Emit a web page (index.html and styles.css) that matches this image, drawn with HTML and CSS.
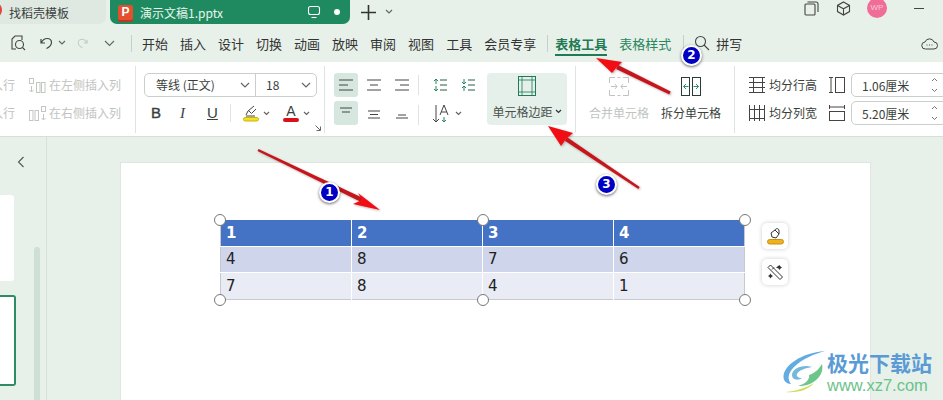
FILE: index.html
```html
<!DOCTYPE html>
<html lang="zh-CN">
<head>
    <meta charset="UTF-8">
    <title>演示文稿1.pptx</title>
    <link rel="stylesheet" href="styles.css">
</head>
<body>
<div class="app">
    <!-- tabs -->
    <header class="tabbar">
        <div class="tab tab-home"><span class="tab-dot"></span>找稻壳模板</div>
        <div class="tab tab-active">
            <span class="ppt-logo">P</span>
            <span class="tab-name">演示文稿1.pptx</span>
            <svg class="tab-monitor" width="14" height="14" viewBox="0 0 14 14" fill="none" stroke="#fff" stroke-width="1.1"><rect x="1.5" y="1.5" width="11" height="8" rx="2"/><path d="M4.5 12.5h5"/></svg>
            <span class="tab-saved"></span>
        </div>
        <svg class="tab-plus" width="15" height="15" viewBox="0 0 15 15" stroke="#333" stroke-width="1.6"><path d="M7.5 0v15M0 7.5h15"/></svg>
        <svg class="chev tab-more" width="8" height="6" viewBox="0 0 8 6"><path d="M1 1l3 3 3-3"/></svg>
        <div class="winctl">
            <svg width="15" height="15" viewBox="0 0 15 15" fill="none" stroke="#444" stroke-width="1.1"><rect x="1" y="3" width="10" height="11" rx="1"/><path d="M3.5 1h8.5a2 2 0 0 1 2 2v8"/></svg>
            <svg class="win-cube" width="15" height="15" viewBox="0 0 15 15" fill="none" stroke="#444" stroke-width="1.1"><path d="M7.5 1l6 3.4v6.2l-6 3.4-6-3.4V4.400zM1.500 4.400l6 3.400 6-3.400M7.500 7.800V14"/></svg>
            <span class="avatar">WP</span>
            <span class="win-min"></span>
        </div>
    </header>

    <!-- menu row -->
    <nav class="menubar">
        <div class="quick">
            <svg class="q-preview" width="16" height="16" viewBox="0 0 16 16" fill="none" stroke="#444" stroke-width="1.1"><path d="M6 14H2V4l3-3h7v4"/><circle cx="9.500" cy="9.500" r="4"/><path d="M12.500 12.500l2.500 2.500"/></svg>
            <svg class="q-undo" width="13" height="13" viewBox="0 0 13 13" fill="none" stroke="#444" stroke-width="1.2"><path d="M1 2v4h4M1.500 5.500C3 2.500 5 1.500 7 1.500c3 0 4.500 2 4.500 4 0 2.500-2 4.500-5 6"/></svg>
            <svg class="chev q-c1" width="8" height="6" viewBox="0 0 8 6"><path d="M1 1l3 3 3-3"/></svg>
            <svg class="q-redo" width="11" height="13" viewBox="0 0 13 13" fill="none" stroke="#c5cbc7" stroke-width="1.2"><path d="M12 2v4H8M11.500 5.500C10 2.500 8 1.500 6 1.500c-3 0-4.500 2-4.500 4 0 2.500 2 4.500 5 6"/></svg>
            <svg class="chev q-c2" width="11" height="7" viewBox="0 0 11 7"><path d="M1 1l4.500 4.500L10 1"/></svg>
        </div>
        <span class="menu-sep sep-first"></span>
        <div class="menu-items">
            <a>开始</a><a>插入</a><a>设计</a><a>切换</a><a>动画</a><a>放映</a><a>审阅</a><a>视图</a><a>工具</a><a>会员专享</a>
        </div>
        <span class="menu-sep sep-tools"></span>
        <a class="menu-tool menu-current">表格工具</a>
        <a class="menu-tool">表格样式</a>
        <span class="menu-sep sep-search"></span>
        <svg class="search-ico" width="16" height="16" viewBox="0 0 16 16" fill="none" stroke="#444" stroke-width="1.1"><circle cx="6.500" cy="6.500" r="5"/><path d="M10 10l5 5"/></svg>
        <a class="menu-spell">拼写</a>
        <svg class="cloud-ico" width="17" height="13" viewBox="0 0 17 13" fill="none" stroke="#444" stroke-width="1"><path d="M4.500 12a3.500 3.500 0 0 1-.5-7A4.800 4.800 0 0 1 13 5a3.500 3.500 0 0 1 0 7z"/><path d="M5.500 8h1M8 8h1M10.500 8h1"/></svg>
    </nav>

    <!-- ribbon -->
    <section class="ribbon">
        <div class="group g-insert">
            <div class="insert-col">
                <span class="off">在上方插入行</span>
                <span class="off">在下方插入行</span>
            </div>
            <div class="insert-col">
                <span class="off with-icon">
                    <svg width="17" height="15" viewBox="0 0 17 15" fill="none" stroke="#c3c7c4"><rect x=".5" y=".5" width="4" height="5"/><path d="M2.500 8v6M.5 12l2 2 2-2"/><rect x="7.500" y="4.500" width="3.500" height="10"/><rect x="12.500" y="4.500" width="3.500" height="10"/></svg>
                    在左侧插入列
                </span>
                <span class="off with-icon">
                    <svg width="17" height="15" viewBox="0 0 17 15" fill="none" stroke="#c3c7c4"><rect x="12.500" y=".5" width="4" height="5"/><path d="M14.500 8v6M12.500 12l2 2 2-2"/><rect x=".5" y="4.500" width="3.500" height="10"/><rect x="6" y="4.500" width="3.500" height="10"/></svg>
                    在右侧插入列
                </span>
            </div>
        </div>

        <div class="group g-font">
            <div class="font-select">
                <div class="fs-name">等线 (正文)<svg class="chev" width="10" height="6" viewBox="0 0 10 6"><path d="M1 1l4 4 4-4"/></svg></div>
                <div class="fs-size">18<svg class="chev" width="10" height="6" viewBox="0 0 10 6"><path d="M1 1l4 4 4-4"/></svg></div>
            </div>
            <div class="font-row">
                <b class="f-b">B</b>
                <i class="f-i">I</i>
                <u class="f-u">U</u>
                <span class="f-sep"></span>
                <span class="f-color">
                    <svg width="16" height="17" viewBox="0 0 16 17" fill="none" stroke="#444"><path d="M3 10l2-4 6-5M6 6l2.500 2.500L13 4M3 11h9" stroke-width="1"/><rect x=".5" y="12.500" width="15" height="3.500" rx="1.700" fill="#f5e11d" stroke="#c9b40f"/></svg>
                    <svg class="chev" width="7" height="5" viewBox="0 0 7 5"><path d="M1 1l2.500 2.500L6 1"/></svg>
                </span>
                <span class="f-color f-text">
                    <span class="f-a">A<em></em></span>
                    <svg class="chev" width="7" height="5" viewBox="0 0 7 5"><path d="M1 1l2.500 2.500L6 1"/></svg>
                </span>
            </div>
            <svg class="launcher" width="6" height="6" viewBox="0 0 6 6" fill="none" stroke="#666"><path d="M.5.500l4.500 4.500M1.500 5.500h4v-4"/></svg>
        </div>

        <div class="group g-para">
            <div class="align-grid">
                <span class="al al-on"><svg width="14" height="12" viewBox="0 0 14 12" stroke="#444"><path d="M0 1h14M0 6h9M0 11h14"/></svg></span>
                <span class="al"><svg width="14" height="12" viewBox="0 0 14 12" stroke="#444"><path d="M0 1h14M3 6h8M0 11h14"/></svg></span>
                <span class="al"><svg width="14" height="12" viewBox="0 0 14 12" stroke="#444"><path d="M0 1h14M5 6h9M0 11h14"/></svg></span>
                <span class="al al-on"><svg width="12" height="12" viewBox="0 0 12 12" stroke="#444"><path d="M0 1h12M2 5h8"/></svg></span>
                <span class="al"><svg width="12" height="12" viewBox="0 0 12 12" stroke="#444"><path d="M0 4h12M2 7.500h8M0 11h12"/></svg></span>
                <span class="al"><svg width="12" height="12" viewBox="0 0 12 12" stroke="#444"><path d="M2 8h8M0 11h12"/></svg></span>
            </div>
            <div class="para-sep"><span></span><span></span></div>
            <div class="para-col">
                <div class="para-row">
                    <svg width="14" height="14" viewBox="0 0 14 14" fill="none" stroke="#2d5a48"><path d="M7 2h7M7 7h7M7 12h7"/><path d="M3 1v5M1 3l2-2 2 2M3 8v5M1 11l2 2 2-2" stroke="#1f8a5f"/></svg>
                    <svg width="14" height="14" viewBox="0 0 14 14" fill="none" stroke="#2d5a48"><path d="M7 2h7M7 7h7M7 12h7"/><path d="M3 1v5M1 4l2 2 2-2M3 8v5M1 10l2-2 2 2" stroke="#1f8a5f"/></svg>
                </div>
                <div class="para-row para-dir">
                    <svg width="18" height="19" viewBox="0 0 18 19" fill="none" stroke="#444"><path d="M4 1v17M1 15l3 3 3-3"/><path d="M8 11l4-10 4 10M9.300 8h5.400"/><path d="M12 13v5M10 16l2 2 2-2" stroke="#1f8a5f"/></svg>
                    <svg class="chev" width="7" height="5" viewBox="0 0 7 5"><path d="M1 1l2.500 2.500L6 1"/></svg>
                </div>
            </div>
        </div>

        <div class="group g-margin">
            <div class="margin-btn">
                <svg width="18" height="20" viewBox="0 0 18 20" fill="none" stroke="#1f7a55" stroke-width="1"><rect x=".5" y=".5" width="17" height="19"/><path d="M4 .5v19M14 .5v19M.5 4h17M.5 16h17" stroke-width=".8"/></svg>
                <span>单元格边距<svg class="chev chev-dark" width="7" height="5" viewBox="0 0 7 5"><path d="M1 1l2.500 2.500L6 1"/></svg></span>
            </div>
        </div>

        <div class="group g-cells">
            <div class="cell-btn off">
                <svg width="20" height="19" viewBox="0 0 20 19" fill="none" stroke="#bfc4c1"><path d="M.5 6V.5H6M14 .5h5.500V6M.5 13v5.500H6M14 18.500h5.500V13M8.500 .5h3M8.500 18.500h3"/><path d="M2 9.500h6M6 7l2 2.500L6 12M18 9.500h-6M14 7l-2 2.500 2 2.500"/></svg>
                <span>合并单元格</span>
            </div>
            <div class="cell-btn">
                <svg width="20" height="19" viewBox="0 0 20 19" fill="none" stroke="#2b3b35"><rect x=".5" y=".5" width="8" height="18"/><rect x="11.500" y=".5" width="8" height="18"/><path d="M7.500 9.500h-5M5 7L2.500 9.500 5 12M12.500 9.500h5M15 7l2.500 2.500L15 12" stroke="#2a9068"/></svg>
                <span>拆分单元格</span>
            </div>
        </div>

        <div class="group g-size">
            <div class="size-row">
                <svg width="16" height="16" viewBox="0 0 16 16" fill="none" stroke="#444"><path d="M0 .5h16M0 15.500h16M0 5.500h16M0 10.500h16M4.500 .5v15M13.500 .5v15"/></svg>
                <span class="size-label">均分行高</span>
                <svg class="size-ico" width="16" height="16" viewBox="0 0 16 16" fill="none" stroke="#444"><path d="M0 .5h4M0 15.500h4M2 .5v15"/><rect x="6.500" y=".5" width="9" height="15"/></svg>
                <div class="size-input">1.06厘米<svg class="spin" width="7" height="16" viewBox="0 0 7 16" fill="none" stroke="#777"><path d="M1 4l2.500-2.500L6 4M1 12l2.500 2.500L6 12"/></svg></div>
            </div>
            <div class="size-row">
                <svg width="16" height="16" viewBox="0 0 16 16" fill="none" stroke="#444"><path d="M.5 0v16M15.500 0v16M5.500 0v16M10.500 0v16M.5 4.500h15M.5 13.500h15"/></svg>
                <span class="size-label">均分列宽</span>
                <svg class="size-ico" width="16" height="16" viewBox="0 0 16 16" fill="none" stroke="#444"><path d="M.5 0v4M15.500 0v4M.5 2h15"/><rect x=".5" y="6.500" width="15" height="9"/></svg>
                <div class="size-input">5.20厘米<svg class="spin" width="7" height="16" viewBox="0 0 7 16" fill="none" stroke="#777"><path d="M1 4l2.500-2.500L6 4M1 12l2.500 2.500L6 12"/></svg></div>
            </div>
        </div>
    </section>

    <!-- workspace -->
    <main class="workspace">
        <aside class="thumbs">
            <svg class="thumbs-toggle" width="8" height="12" viewBox="0 0 8 12" fill="none" stroke="#555" stroke-width="1.1"><path d="M6.500 1l-5 5 5 5"/></svg>
            <div class="thumb"></div>
            <div class="thumb thumb-on"></div>
            <div class="thumb-scroll"></div>
        </aside>
        <div class="canvas">
            <div class="slide">
                <div class="table-wrap">
                    <table class="ppt-table">
                        <tr class="row-head"><td>1</td><td>2</td><td>3</td><td>4</td></tr>
                        <tr class="row-a"><td>4</td><td>8</td><td>7</td><td>6</td></tr>
                        <tr class="row-b"><td>7</td><td>8</td><td>4</td><td>1</td></tr>
                    </table>
                    <span class="handle h-tl"></span><span class="handle h-tc"></span><span class="handle h-tr"></span>
                    <span class="handle h-bl"></span><span class="handle h-bc"></span><span class="handle h-br"></span>
                    <div class="float-tools">
                        <span class="float-btn">
                            <svg width="17" height="18" viewBox="0 0 17 18" fill="none" stroke="#333"><path d="M4 6l4-3 4 4-3 4-4-1zM8 3c1-2 4-2 4 1v3"/><rect x=".5" y="12.500" width="16" height="4.500" rx="2.200" fill="#f0b21c" stroke="#c98f10"/></svg>
                        </span>
                        <span class="float-btn">
                            <svg width="17" height="17" viewBox="0 0 17 17" fill="none" stroke="#333"><path d="M3.500 1l12 12-2.500 2.500-12-12zM5 5.500l2-2"/><path d="M12.500 1l1 1.500 1.500 1-1.500 1-1 1.500-1-1.500L9 3.500l1.500-1zM3.500 9.500l1 1.500 1.500 1-1.500 1-1 1.500-1-1.500L1 12l1.500-1z" fill="#333" stroke="none"/></svg>
                        </span>
                    </div>
                </div>
            </div>
        </div>
    </main>

    <!-- annotations on top of the screenshot -->
    <svg class="marks" width="943" height="400" viewBox="0 0 943 400">
        <defs>
            <filter id="soft" x="-20%" y="-20%" width="140%" height="140%"><feDropShadow dx="1" dy="1" stdDeviation="1" flood-color="#000" flood-opacity=".3"/></filter>
        </defs>
        <g filter="url(#soft)">
            <path class="shaft" d="M258.500 149L363 198 361 202 257.500 151z"/>
            <path class="head" d="M380 210L358 193 362 200 353 204z"/>
            <path class="shaft" d="M670.700 91.600L618 65 616 69 669.300 94.400z"/>
            <path class="head" d="M596 58L622 62 617 67 612 73z"/>
            <path class="shaft" d="M639.700 187L567.200 137.200 564.800 140.800 638.300 189z"/>
            <path class="head" d="M548 126L573 133 566 139 561 146z"/>
        </g>
    </svg>
    <span class="badge b1">1</span>
    <span class="badge b2">2</span>
    <span class="badge b3">3</span>

    <div class="watermark">
        <svg width="44" height="44" viewBox="0 0 44 44" fill="none">
            <path d="M43 2C28 3 8 10 2 24 0 31 4 35 9 35 5 30 6 24 12 18 20 10 32 5 43 2z" fill="#62ace2"/>
            <path d="M30 18C20 15 10 20 10 26 10 31 16 32 20 29 16 29 14 27 15 25 17 21 24 19 30 18z" fill="#74b8dc"/>
            <path d="M40 15C43 27 30 38 16 37 24 35 28 30 27 26 33 24 37 20 40 15z" fill="#6cc58a"/>
            <path d="M4 43C14 42 24 39 32 34 26 41 16 44 4 43z" fill="#cfdc5a"/>
        </svg>
        <div class="wm-text">
            <span class="wm-name">极光下载站</span>
            <span class="wm-url">www.xz7.com</span>
        </div>
    </div>
</div>
</body>
</html>
```

FILE: styles.css
```css
* {
    box-sizing: border-box;
    padding: 0;
    margin: 0;
}

html, body {
    height: 100%;
    overflow: hidden;
}

body {
    font-family: "Noto Sans CJK SC", "Liberation Sans", sans-serif;
    font-size: 12px;
    color: #3a3f3c;
    background: #e7f1e9;
}

svg {
    display: block;
    flex: none;
}

.chev {
    fill: none;
    stroke: #666;
    stroke-width: 1.2;
}

.chev-dark {
    stroke: #333;
}

.off {
    color: #bfc4c1;
}

.app {
    position: relative;
    width: 943px;
    height: 400px;
    overflow: hidden;
}

/* tabs */
.tabbar {
    display: flex;
    align-items: center;
    height: 24px;
}

.tab {
    display: flex;
    align-items: center;
    height: 24px;
    font-size: 12px;
}

.tab-home {
    width: 106px;
    padding-left: 9px;
    background: #dfe9e2;
    border-radius: 0 0 7px 0;
    position: relative;
}

.tab-dot {
    position: absolute;
    left: -6px;
    top: 4px;
    width: 8px;
    height: 12px;
    border-radius: 50%;
    background: #e0483c;
}

.tab-active {
    width: 240px;
    margin-left: 4px;
    padding-left: 8px;
    background: #1f8a5f;
    border-radius: 0 0 7px 7px;
    color: #e8f5ee;
}

.ppt-logo {
    width: 15px;
    height: 15px;
    margin-right: 7px;
    background: #e2502f;
    border-radius: 2px;
    box-shadow: 0 2px 0 #b83c20;
    color: #fff;
    font: bold 12px/14px "Liberation Sans", sans-serif;
    text-align: center;
}

.tab-name {
    width: 167px;
}

.tab-saved {
    width: 6px;
    height: 6px;
    margin-left: 13px;
    border-radius: 50%;
    background: #fff;
}

.tab-plus {
    margin-left: 11px;
}

.tab-more {
    margin-left: 9px;
}

.winctl {
    display: flex;
    align-items: center;
    margin-left: 411px;
    padding-bottom: 8px;
    height: 24px;
}

.win-cube {
    margin-left: 17px;
}

.avatar {
    width: 20px;
    height: 20px;
    margin-left: 16px;
    border-radius: 50%;
    background: #ef6d97;
    color: #f9c9d8;
    font: 8px/20px "Liberation Sans", sans-serif;
    text-align: center;
}

.win-min {
    width: 10px;
    height: 1px;
    margin-left: 27px;
    background: #444;
}

/* menu row */
.menubar {
    display: flex;
    align-items: center;
    height: 38px;
    font-size: 13px;
    color: #333;
}

.quick {
    display: flex;
    align-items: center;
    width: 131px;
    padding-left: 10px;
}

.q-undo {
    margin-left: 14px;
}

.q-c1 {
    margin-left: 5px;
}

.q-redo {
    margin-left: 11px;
}

.q-c2 {
    margin-left: 16px;
}

.menu-sep {
    width: 1px;
    height: 17px;
    background: #c5d0c9;
}

.menu-items {
    display: flex;
    gap: 12px;
    margin-left: 10px;
}

.sep-tools {
    margin-left: 11px;
}

.menu-tool {
    position: relative;
    margin-left: 12px;
    color: #2a8560;
}

.sep-tools + .menu-tool {
    margin-left: 7px;
}

.menu-current {
    font-weight: 700;
    color: #1f7a55;
}

.menu-current::after {
    content: "";
    position: absolute;
    left: 0;
    right: 0;
    bottom: -3px;
    height: 2px;
    background: #1f7a55;
}

.sep-search {
    margin-left: 12px;
}

.search-ico {
    margin-left: 10px;
}

.menu-spell {
    margin-left: 6px;
}

.cloud-ico {
    margin-left: 179px;
}

/* ribbon */
.ribbon {
    display: flex;
    height: 75px;
    padding: 4px 0;
    background: #fff;
    border-bottom: 1px solid #d7dfda;
    margin-left: -57px;
    width: 1000px;
}

.group {
    display: flex;
    position: relative;
    height: 67px;
    padding-top: 7px;
    border-right: 1px solid #dfe4e1;
    flex: none;
}

.g-insert {
    width: 193px;
    gap: 14px;
}

.insert-col {
    display: flex;
    flex-direction: column;
    gap: 10px;
    padding-top: 3px;
    line-height: 18px;
}

.with-icon {
    display: flex;
    align-items: center;
    gap: 3px;
}

.g-font {
    display: block;
    width: 189px;
    padding-left: 8px;
}

.font-select {
    display: flex;
    width: 173px;
    height: 24px;
    border: 1px solid #c9cfcb;
    border-radius: 5px;
    line-height: 22px;
}

.fs-name,
.fs-size {
    display: flex;
    align-items: center;
    justify-content: space-between;
}

.fs-name {
    width: 111px;
    padding: 0 5px 0 11px;
    border-right: 1px solid #c9cfcb;
}

.fs-size {
    flex: 1;
    padding: 0 5px 0 10px;
}

.font-row {
    display: flex;
    align-items: center;
    height: 24px;
    margin-top: 4px;
    font: 15px/24px "Liberation Sans", sans-serif;
}

.f-b {
    margin-left: 7px;
    font-weight: 400;
    -webkit-text-stroke: .4px #3a3f3c;
}

.f-i {
    margin-left: 19px;
    font-family: "Liberation Serif", serif;
}

.f-u {
    margin-left: 22px;
}

.f-sep {
    width: 1px;
    height: 18px;
    margin-left: 12px;
    background: #dfe4e1;
}

.f-color {
    display: flex;
    align-items: center;
    gap: 4px;
    margin-left: 12px;
}

.f-text {
    margin-left: 13px;
}

.f-a {
    position: relative;
    width: 16px;
    height: 19px;
    font-size: 14px;
    line-height: 15px;
    text-align: center;
}

.f-a em {
    position: absolute;
    left: 0;
    bottom: 1px;
    width: 16px;
    height: 4px;
    border-radius: 2px;
    background: #d9101a;
}

.launcher {
    position: absolute;
    right: 3px;
    bottom: 2px;
}

.g-para {
    width: 251px;
    padding-left: 9px;
    border: 0;
}

.align-grid {
    display: grid;
    grid-template-columns: repeat(3, 24px);
    grid-auto-rows: 24px;
    gap: 4px;
}

.al {
    display: flex;
    align-items: center;
    justify-content: center;
    border-radius: 3px;
}

.al-on {
    background: #d5e7df;
}

.para-sep {
    display: flex;
    flex-direction: column;
    gap: 10px;
    margin: 2px 0 0 4px;
}

.para-sep span {
    width: 1px;
    height: 20px;
    background: #dfe4e1;
}

.para-col {
    display: flex;
    flex-direction: column;
    gap: 4px;
    margin-left: 14px;
}

.para-row {
    display: flex;
    align-items: center;
    gap: 14px;
    height: 24px;
}

.para-dir {
    gap: 5px;
    margin-left: -1px;
}

.g-margin {
    width: 89px;
    margin-left: -89px;
    border-right: 1px solid #dfe4e1;
}

.margin-btn {
    display: flex;
    flex-direction: column;
    align-items: center;
    width: 80px;
    height: 52px;
    padding-top: 3px;
    background: #e5f0ea;
    border-radius: 4px;
}

.margin-btn span {
    display: flex;
    align-items: center;
    gap: 2px;
    margin-top: 7px;
    color: #4a504c;
}

.g-cells {
    width: 159px;
    padding-left: 13px;
    gap: 12px;
}

.cell-btn {
    display: flex;
    flex-direction: column;
    align-items: center;
    width: 60px;
    padding-top: 4px;
}

.cell-btn span {
    margin-top: 8px;
}

.g-size {
    display: block;
    padding-left: 14px;
    border: 0;
}

.size-row {
    display: flex;
    align-items: center;
    height: 24px;
    margin-bottom: 4px;
}

.size-label {
    margin: -2px 0 0 4px;
    width: 48px;
}

.size-ico {
    margin-left: 12px;
}

.size-input {
    display: flex;
    align-items: center;
    justify-content: space-between;
    width: 96px;
    height: 24px;
    margin-left: 6px;
    padding: 0 4px 0 10px;
    border: 1px solid #c9cfcb;
    border-radius: 5px;
}

.spin {
    margin-right: 4px;
}

/* workspace */
.workspace {
    display: flex;
    height: 263px;
}

.thumbs {
    position: relative;
    width: 47px;
    border-right: 1px solid #d6e1da;
    padding-top: 58px;
}

.thumbs-toggle {
    position: absolute;
    left: 17px;
    top: 19px;
}

.thumb {
    width: 14px;
    height: 86px;
    background: #fff;
    border-radius: 0 3px 3px 0;
}

.thumb-on {
    width: 16px;
    height: 91px;
    margin-top: 14px;
    border: 2px solid #2e8b63;
    border-left: 0;
}

.thumb-scroll {
    position: absolute;
    left: 34px;
    top: 110px;
    bottom: 0;
    width: 6px;
    border-radius: 3px 3px 0 0;
    background: #cddfd7;
}

.canvas {
    flex: 1;
    padding: 25px 0 0 73px;
}

.slide {
    width: 751px;
    height: 240px;
    padding: 57px 0 0 99px;
    background: #fff;
    border: 1px solid #dfe5e1;
    border-bottom: 0;
}

.table-wrap {
    position: relative;
    width: 525px;
}

.ppt-table {
    width: 525px;
    border-collapse: collapse;
    table-layout: fixed;
    font: 15px "DejaVu Sans", sans-serif;
    color: #222;
    border: 1px solid #c6c9cf;
    border-top: 0;
}

.ppt-table td {
    padding: 0 0 0 5px;
    border-left: 1px solid #fff;
    border-top: 1px solid #fff;
}

.ppt-table td:first-child {
    border-left: 0;
}

.row-head td {
    height: 26px;
    background: #4472c4;
    color: #fff;
    font-weight: 700;
    border-top: 0;
    border-bottom: 1px solid #fff;
}

.row-a td {
    height: 26px;
    background: #cfd5ea;
}

.row-b td {
    height: 27px;
    background: #e9ebf5;
}

.handle {
    position: absolute;
    width: 12px;
    height: 12px;
    border: 1px solid #777;
    border-radius: 50%;
    background: #fff;
}

.h-tl { left: -6px; top: -6px; }
.h-tc { left: 257px; top: -6px; }
.h-tr { right: -6px; top: -6px; }
.h-bl { left: -6px; bottom: -6px; }
.h-bc { left: 257px; bottom: -6px; }
.h-br { right: -6px; bottom: -6px; }

.float-tools {
    position: absolute;
    left: 542px;
    top: 3px;
    display: flex;
    flex-direction: column;
    gap: 10px;
}

.float-btn {
    display: flex;
    align-items: center;
    justify-content: center;
    width: 26px;
    height: 26px;
    border-radius: 5px;
    background: #fff;
    box-shadow: 0 0 4px rgba(0, 0, 0, .2);
}

/* annotations */
.marks {
    position: absolute;
    left: 0;
    top: 0;
    pointer-events: none;
}

.shaft {
    fill: #c4191d;
}

.head {
    fill: #f00a12;
}

.badge {
    position: absolute;
    width: 21px;
    height: 21px;
    border: 2px solid #fff;
    border-radius: 50%;
    background: #0000c4;
    box-shadow: 0 1px 3px rgba(0, 0, 0, .6);
    color: #fff;
    font: bold 12px/17px "DejaVu Sans", sans-serif;
    text-align: center;
}

.b1 { left: 319px; top: 182px; }
.b2 { left: 681px; top: 45px; }
.b3 { left: 596px; top: 174px; }

.watermark {
    position: absolute;
    left: 782px;
    top: 349px;
    display: flex;
    gap: 1px;
}

.wm-text {
    display: flex;
    flex-direction: column;
}

.wm-name {
    font-size: 21px;
    font-weight: 700;
    line-height: 26px;
    color: #5b9bd5;
}

.wm-url {
    font: 16.500px/21px "Liberation Sans", sans-serif;
    color: #6cc28a;
}
```
